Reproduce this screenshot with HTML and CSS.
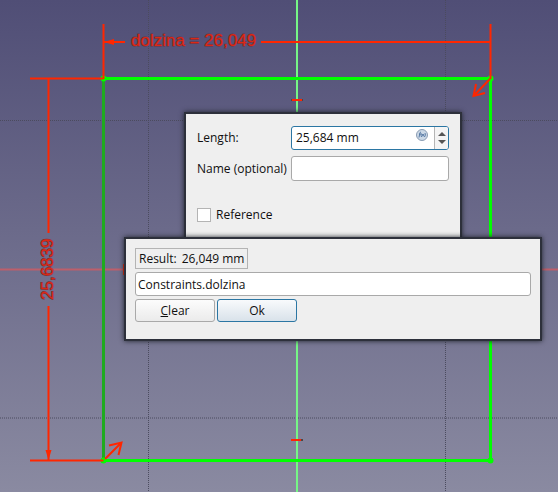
FILE: index.html
```html
<!DOCTYPE html>
<html lang="en">
<head>
<meta charset="utf-8">
<meta name="viewport" content="width=device-width, initial-scale=1">
<title>Sketcher</title>
<link rel="stylesheet" href="styles.css">
</head>
<body>
<main class="workspace">
  <svg class="sketch" viewBox="0 0 558 492" preserveAspectRatio="xMidYMid slice" role="img" aria-label="Constrained rectangle sketch">
    <g class="grid">
      <path d="M148.500 0V492M445.500 0V492"/>
      <path d="M0 120.500H558M0 418H558"/>
    </g>
    <path class="axis-x" d="M0 269.500H558"/>
    <path class="axis-y" d="M297 0V492"/>
    <path class="edge-dark" d="M103.500 78V460"/>
    <path class="edge" d="M103.500 78.500H490.500V460.500H103.500"/>
    <g class="vertex">
      <circle cx="103.500" cy="78.500" r="3"/>
      <circle cx="490.500" cy="78.500" r="3"/>
      <circle cx="103.500" cy="460.500" r="3"/>
      <circle cx="490.500" cy="460.500" r="3"/>
    </g>
    <g class="dimension">
      <path d="M103.500 24V79M490.500 24V79M103.500 42H125M261 42H490.500"/>
      <path d="M30 78.500H103.500M30 460.500H103.500M48.500 79V233M48.500 306V460"/>
      <path class="tip" d="M104 42L114 39V45ZM48.500 460L45.500 450H51.500Z"/>
      <path d="M490 79L474 95.500M476 84L473.500 96L485 93"/>
      <path d="M105 459L120.500 443.500M109 445.500L121.500 442.500L118.500 455"/>
    </g>
    <path class="mark-shadow" d="M291 100H303M291 440H303"/>
    <path class="mark" d="M292 100H302M291 440H301"/>
    <path class="mark" d="M124 264V275"/>
    <text class="dim-text" x="131" y="46">dolzina = 26,049</text>
    <text class="dim-text" transform="translate(53 300) rotate(-90)">25,6839</text>
  </svg>

  <form class="dialog dialog-length">
    <div class="fields">
      <label for="length">Length:</label>
      <div class="spin">
        <input id="length" type="text" value="25,684 mm">
        <button class="formula" type="button" aria-label="Edit expression">
          <svg viewBox="0 0 12 12" aria-hidden="true">
            <circle cx="6" cy="6" r="5.500" fill="#cbd8e6" stroke="#8a9cb2"/>
            <path d="M5 3Q4 3 3.800 4.500L3 8.500M3 5H5M5.500 4.500Q4.500 6 5.500 8M6 5L8 7.500M8 5L6 7.500M9 4Q10 6 8.500 8" fill="none" stroke="#3e6595" stroke-width=".8"/>
          </svg>
        </button>
        <div class="steppers">
          <button type="button" aria-label="Increase"><svg viewBox="0 0 8 4" aria-hidden="true"><path d="M0 4L4 0L8 4Z"/></svg></button>
          <button type="button" aria-label="Decrease"><svg viewBox="0 0 8 4" aria-hidden="true"><path d="M0 0L4 4L8 0Z"/></svg></button>
        </div>
      </div>
      <label for="name">Name (optional)</label>
      <input id="name" class="box" type="text">
    </div>
    <div class="check">
      <input id="reference" type="checkbox">
      <label for="reference">Reference</label>
    </div>
  </form>

  <form class="dialog dialog-formula">
    <output class="result" for="expression"><span>Result:</span><span>26,049 mm</span></output>
    <input id="expression" class="box" type="text" value="Constraints.dolzina" aria-label="Expression">
    <div class="actions">
      <button class="push" type="button" accesskey="c"><span><u>C</u>lear</span></button>
      <button class="push primary" type="button">Ok</button>
    </div>
  </form>
</main>
</body>
</html>
```
FILE: styles.css
```css
* {
  box-sizing: border-box;
}

body {
  margin: 0;
  color: #101010;
  font: 12px/16px "Open Sans", "Noto Sans", sans-serif;
}

.workspace {
  position: relative;
  min-height: 100vh;
  overflow: hidden;
  background: linear-gradient(#504e76, #8a8aa1);
}

.sketch {
  position: absolute;
  inset: 0;
  width: 100%;
  height: 100%;
}

.sketch path {
  fill: none;
}

.grid {
  stroke: #4b4b5e;
  stroke-width: 1;
  stroke-dasharray: 1 1;
}

.axis-x {
  stroke: #bd5f6b;
  stroke-width: 2;
}

.axis-y {
  stroke: #76f586;
  stroke-width: 2;
}

.sketch .edge {
  stroke: #00ff00;
  stroke-width: 3;
}

.edge-dark {
  stroke: #1fab1f;
  stroke-width: 3;
}

.vertex {
  fill: #00ff00;
}

.dimension,
.mark {
  stroke: #ff2600;
  stroke-width: 2;
}

.mark-shadow {
  stroke: #4d4545;
  stroke-width: 2;
}

.sketch .tip {
  fill: #ff2600;
  stroke: none;
}

.dim-text {
  fill: #dc2814;
  stroke: #72303d;
  stroke-width: 1;
  paint-order: stroke;
  font: 17px "Liberation Sans", Arial, sans-serif;
}

.dialog {
  position: absolute;
  border: 2px solid #2d303b;
  background: #efefef;
  box-shadow: 0 0 5px #20242c;
}

.dialog-length {
  left: 184px;
  top: 112px;
  width: 278px;
  padding: 12px 11px 16px;
}

.dialog-formula {
  left: 124px;
  top: 237px;
  width: 418px;
  display: flex;
  flex-direction: column;
  align-items: stretch;
  gap: 3px;
  padding: 9px 9px 17px;
}

.fields {
  display: grid;
  grid-template-columns: 88px 1fr;
  align-items: center;
  gap: 6px;
}

label {
  white-space: nowrap;
}

input,
button {
  margin: 0;
  color: inherit;
  font: inherit;
}

input:focus,
button:focus {
  outline: none;
}

.box,
.spin {
  width: 100%;
  height: 24px;
  border: 1px solid #a9a9a9;
  border-radius: 3px;
  background: #fff;
}

.box {
  padding: 0 2px;
}

#name {
  height: 25px;
}

.spin {
  display: flex;
  border-color: #2b76a3;
  overflow: hidden;
}

.spin input {
  flex: 1;
  min-width: 0;
  padding: 0 4px;
  border: 0;
  background: none;
}

.formula {
  width: 12px;
  height: 12px;
  margin: 2px 6px 0 0;
  padding: 0;
  border: 0;
  background: none;
}

.formula svg {
  display: block;
}

.steppers {
  display: flex;
  flex-direction: column;
  justify-content: center;
  gap: 4px;
  width: 14px;
  border-left: 1px solid #b5b5b5;
  background: #f4f4f4;
}

.steppers button {
  display: flex;
  justify-content: center;
  padding: 0;
  border: 0;
  background: none;
}

.steppers svg {
  width: 8px;
  height: 4px;
}

.steppers path {
  fill: #555;
}

.check {
  display: flex;
  align-items: center;
  gap: 5px;
  margin-top: 26px;
}

.check input {
  appearance: none;
  width: 14px;
  height: 14px;
  border: 1px solid #b4b4b4;
  background: #fff;
}

.result {
  display: flex;
  align-self: flex-start;
  gap: 5px;
  height: 21px;
  padding: 2px 3px;
  border: 1px solid #b4b4b4;
}

.actions {
  display: flex;
  gap: 2px;
}

.push {
  width: 80px;
  height: 23px;
  padding: 0;
  border: 1px solid #a9a9a9;
  border-radius: 3px;
  background: linear-gradient(#fcfcfc, #ebebeb);
}

.primary {
  border-color: #2b76a3;
  background: linear-gradient(#f8fafc, #d9e2ea);
}
```
